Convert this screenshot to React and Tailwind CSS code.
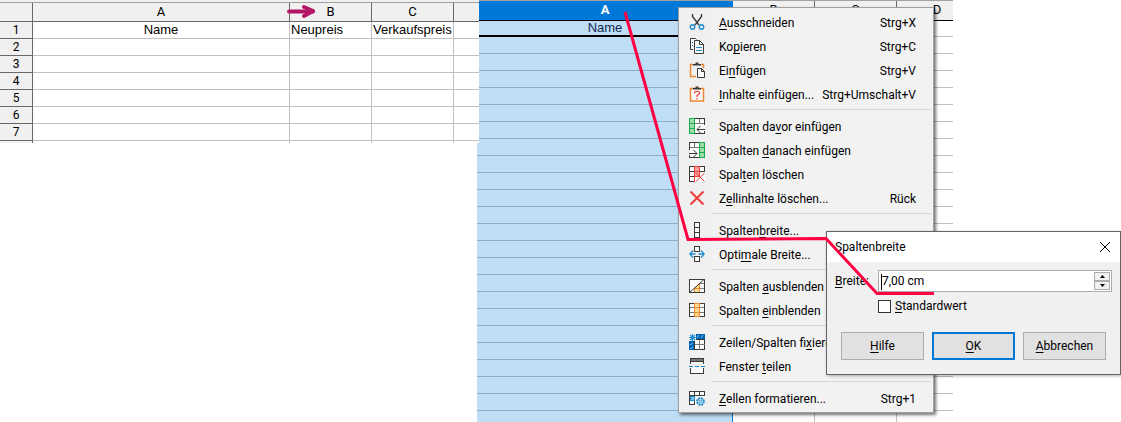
import React, { useState } from 'react';

const DARK = '#3a3a38';
const BLUE = '#1e8bcd';
const GREEN = '#18ab50';
const RED = '#ed3d3b';
const ORANGE = '#ed8733';

const Icon = ({ children, crisp = true }) => (
    <svg width="16" height="16" viewBox="0 0 16 16" fill="none" stroke={DARK}
        shapeRendering={crisp ? 'crispEdges' : 'auto'} aria-hidden="true">
        {children}
    </svg>
);

const CutIcon = () => (
    <Icon crisp={false}>
        <path d="M3.500 0v2.500L10 11M12.500 0v2.500L6 11" strokeWidth="1.400" />
        <circle cx="3.500" cy="13" r="2.200" stroke={BLUE} strokeWidth="1.400" />
        <circle cx="12.500" cy="13" r="2.200" stroke={BLUE} strokeWidth="1.400" />
    </Icon>
);

const CopyIcon = () => (
    <Icon crisp={false}>
        <path d="M4 11.500H1.500V.5h5l1 1" fill="#fafafa" />
        <path d="M5.500 2.500h5l4 4v9h-9z" fill="#fafafa" />
        <path d="M10.500 2.500v4h4" />
        <path d="M7 9.500h6M7 12.500h6M3 4.500h1M3 7.500h1" stroke={BLUE} />
    </Icon>
);

const PasteIcon = () => (
    <Icon crisp={false}>
        <path d="M4.500 2.500h-3v12H7M11.500 2.500h3V6" stroke={ORANGE} strokeWidth="1.500" />
        <path d="M4 3.500V2h2.500V.5h3V2H12v1.500z" fill={DARK} stroke="none" />
        <path d="M8.500 6.500h4l3 3v6h-7z" fill="#fafafa" />
        <path d="M12.500 6.500v3h3" />
    </Icon>
);

const PasteSpecialIcon = () => (
    <Icon crisp={false}>
        <path d="M1.500 2.500h13v12.500h-13z" fill="#fafafa" stroke={ORANGE} strokeWidth="1.500" />
        <path d="M4 3.500V2h2.500V.5h3V2H12v1.500z" fill={DARK} stroke="none" />
        <path d="M5.500 7.500V6.500Q5.500 5.500 6.500 5.500h3q1 0 1 1v1L8 9.500v1.500M8 12v1.500" stroke={RED} strokeWidth="1.200" />
    </Icon>
);

const InsertBeforeIcon = () => (
    <Icon>
        <path d="M5.500.5h10v15h-10z" fill="#fafafa" stroke="none" />
        <path d="M5 5.500h10.500M10.500 0v6" stroke="#787878" />
        <path d="M5.500.5h10v6M6 15.500h9.500V13" />
        <path d="M.5.5h5v15h-5z" fill="#a0dcaa" stroke={GREEN} />
        <path d="M1 5.500h4M1 10.500h4" stroke={GREEN} />
        <path d="M16 11.500H8M11.500 8L8 11.500l3.500 3.500" shapeRendering="auto" />
    </Icon>
);

const InsertAfterIcon = () => (
    <Icon>
        <path d="M.5.5h10v15H.5z" fill="#fafafa" stroke="none" />
        <path d="M1 5.500h9M5.500 1v5" stroke="#787878" />
        <path d="M.5 8V.5h10M.5 13v2.500h10" />
        <path d="M10.500.5h5v15h-5z" fill="#a0dcaa" stroke={GREEN} />
        <path d="M11 5.500h4M11 10.500h4" stroke={GREEN} />
        <path d="M0 11.500h8M4.500 8L8 11.500 4.500 15" shapeRendering="auto" />
    </Icon>
);

const DeleteColumnsIcon = () => (
    <Icon>
        <path d="M.5.5h15v15H.5z" fill="#fafafa" stroke="none" />
        <path d="M15.500 5V.5H.5v15H6M.5 5.500h15M.5 10.500h5" />
        <path d="M5.500.5h5v10h-5z" fill="#f5a0a0" stroke={RED} />
        <path d="M5.500 5.500h5M5.500 10v6" stroke={RED} />
        <path d="M7 7l8.500 8.500M15.500 7L7 15.500" stroke={RED} shapeRendering="auto" />
    </Icon>
);

const DeleteIcon = () => (
    <Icon crisp={false}>
        <path d="M1.500 1.500l13 13M14.500 1.500l-13 13" stroke={RED} strokeWidth="2" />
    </Icon>
);

const ColumnWidthIcon = () => (
    <Icon>
        <path d="M5.500.5h5v15h-5zM5.500 5.500h5M5.500 10.500h5" fill="#fafafa" />
    </Icon>
);

const OptimalWidthIcon = () => (
    <Icon>
        <path d="M5.500.5h5v5h-5zM5.500 10.500h5v5h-5z" fill="#fafafa" />
        <path d="M.8 8H6.500M9.500 8h5.700M4 4.500L.8 8 4 11.500M12 4.500L15.200 8 12 11.500" stroke={BLUE} strokeWidth="1.300" shapeRendering="auto" />
    </Icon>
);

const HideColumnsIcon = () => (
    <Icon>
        <path d="M.5 1.500h15v13H.5z" fill="#fafafa" />
        <path d="M11 5.500h4.500M5 10.500h10.500" stroke="#787878" />
        <path d="M5.500 14.500v-4l5-5v9z" fill="#f8db8f" stroke={ORANGE} />
        <path d="M5.500 10.500h5" stroke={ORANGE} />
        <path d="M.5 14.500L15 1.500" shapeRendering="auto" />
        <path d="M.5 1.500h15v13H.5z" />
    </Icon>
);

const ShowColumnsIcon = () => (
    <Icon>
        <path d="M.5 1.500h15v13H.5z" fill="#fafafa" />
        <path d="M1 5.500h14M1 10.500h14" stroke="#787878" />
        <path d="M5.500 1.500h5v13h-5z" fill="#f8db8f" stroke={ORANGE} />
        <path d="M5.500 5.500h5M5.500 10.500h5" stroke={ORANGE} />
    </Icon>
);

const FreezeIcon = () => (
    <Icon>
        <path d="M0 0h16v16H0z" fill="#0063b1" stroke="none" />
        <path d="M5.500 5.500h10v10h-10z" fill="#fafafa" />
        <path d="M10.500 5.500v10M5.500 10.500h10" stroke="#787878" />
        <path d="M0 0h7v7H0z" fill="#f2f2f2" stroke="none" />
        <path d="M8 4l2-3M12 4l2-3M1 11l3-2M1 15l3-2" stroke="#83beec" shapeRendering="auto" />
        <path d="M3.500 0v7M0 3.500h7M1 1l5 5M6 1L1 6" stroke={BLUE} strokeWidth="1.200" shapeRendering="auto" />
    </Icon>
);

const SplitIcon = () => (
    <Icon>
        <path d="M1.500 6V.5h13V6M1.500 10v5.500h13V10" fill="#fafafa" />
        <path d="M2 1h12v3H2z" fill="#797774" stroke="none" />
        <path d="M1 3.500h14" />
        <path d="M0 8.500h4M6 8.500h4M12 8.500h4" stroke={BLUE} />
    </Icon>
);

const FormatCellsIcon = () => (
    <Icon>
        <path d="M.5 1.500h15v13H.5z" fill="#fafafa" stroke="none" />
        <path d="M15.500 6V1.500H.5v13H6M5.500 1.500v13M10.500 1.500V6M.5 5.500h15M.5 10.500h5" />
        <path d="M1 6h4v4H1z" fill="#83beec" stroke={BLUE} />
        <circle cx="11.500" cy="11.500" r="4.500" fill="#f2f2f2" stroke="none" />
        <circle cx="11.500" cy="11.500" r="3.500" stroke={BLUE} strokeWidth="1.800" strokeDasharray="1.700 1.050" shapeRendering="auto" />
        <circle cx="11.500" cy="11.500" r="3" stroke={BLUE} strokeWidth=".8" shapeRendering="auto" />
        <circle cx="11.500" cy="11.500" r="1.200" stroke={BLUE} shapeRendering="auto" />
    </Icon>
);

// An underscore in a label marks the access key that follows it
const menuGroups = [
    [
        { label: '_Ausschneiden', shortcut: 'Strg+X', icon: CutIcon },
        { label: 'Ko_pieren', shortcut: 'Strg+C', icon: CopyIcon },
        { label: 'Ei_nfügen', shortcut: 'Strg+V', icon: PasteIcon },
        { label: '_Inhalte einfügen...', shortcut: 'Strg+Umschalt+V', icon: PasteSpecialIcon }
    ],
    [
        { label: 'Spalten da_vor einfügen', icon: InsertBeforeIcon },
        { label: 'Spalten _danach einfügen', icon: InsertAfterIcon },
        { label: 'Spal_ten löschen', icon: DeleteColumnsIcon },
        { label: 'Z_ellinhalte löschen...', shortcut: 'Rück', icon: DeleteIcon }
    ],
    [
        { label: 'Spalten_breite...', icon: ColumnWidthIcon },
        { label: 'Opti_male Breite...', icon: OptimalWidthIcon }
    ],
    [
        { label: 'Spalten _ausblenden', icon: HideColumnsIcon },
        { label: 'Spalten _einblenden', icon: ShowColumnsIcon }
    ],
    [
        { label: 'Zeilen/Spalten fi_xieren', icon: FreezeIcon },
        { label: 'Fenster _teilen', icon: SplitIcon }
    ],
    [
        { label: '_Zellen formatieren...', shortcut: 'Strg+1', icon: FormatCellsIcon }
    ]
];

const AccessLabel = ({ text }) => {
    const [before, after] = text.split('_');
    return (
        <span className="whitespace-pre">{before}<span className="underline underline-offset-2">{after[0]}</span>{after.slice(1)}</span>
    );
};

const PriceSheet = () => {
    const head = 'h-[19px] p-0 border-r border-b border-[#696969] font-normal leading-[18px]';
    const cell = 'h-[17px] p-0 border-r border-b border-[#c0c0c0] leading-4';

    return (
        <div className="relative z-10 -mr-0.5 h-[143px] overflow-hidden bg-white">
            <div className="h-[3px] bg-[#f0f0f0] border-b border-[#a0a0a0]" />
            <table className="w-full table-fixed border-separate border-spacing-0">
                <colgroup>
                    <col className="w-[33px]" />
                    <col />
                    <col className="w-[82px]" />
                    <col className="w-[82px]" />
                    <col className="w-[25px]" />
                </colgroup>
                <thead className="bg-[#f0f0f0] text-[13px]">
                    <tr>
                        <th className={head}></th>
                        <th className={head}>A</th>
                        <th className={head}>B</th>
                        <th className={head}>C</th>
                        <th className="h-[19px] p-0 border-b border-[#696969]"></th>
                    </tr>
                </thead>
                <tbody>
                    {[1, 2, 3, 4, 5, 6, 7, 8].map(row => (
                        <tr key={row}>
                            <th className="h-[17px] p-0 border-r border-b border-[#696969] bg-[#f0f0f0] text-xs font-normal leading-4">{row < 8 ? row : ''}</th>
                            <td className={`${cell} text-center font-['Liberation_Sans',sans-serif] text-[13px]`}>{row === 1 && 'Name'}</td>
                            <td className={`${cell} pl-px font-['Liberation_Sans',sans-serif] text-[13px]`}>{row === 1 && 'Neupreis'}</td>
                            <td className={`${cell} pl-px font-['Liberation_Sans',sans-serif] text-[13px]`}>{row === 1 && 'Verkaufspreis'}</td>
                            <td className="h-[17px] p-0 border-b border-[#c0c0c0]"></td>
                        </tr>
                    ))}
                </tbody>
            </table>
            {/* Arrow on the border between columns A and B */}
            <svg className="absolute top-0 right-[163px] pointer-events-none" width="30" height="22" viewBox="0 0 30 22"
                fill="none" stroke="#b31766" strokeLinecap="round" strokeLinejoin="round" aria-hidden="true">
                <path d="M3 11.500H27" strokeWidth="4" />
                <path d="M18 7l9 4-9 5" strokeWidth="4" />
            </svg>
        </div>
    );
};

const SelectedSheet = () => {
    const head = 'h-5 p-0 pb-0.5 border-r border-b border-r-[#696969] border-b-black bg-[#f0f0f0] font-normal leading-4';
    const cell = 'h-[17px] p-0 border-r border-b border-[#c0c0c0]';

    return (
        <div className="h-[422px] overflow-hidden">
            <div className="h-px bg-[#a0a0a0]" />
            <table className="w-full table-fixed border-separate border-spacing-0 text-[13px]">
                <colgroup>
                    <col />
                    <col className="w-[82px]" />
                    <col className="w-[82px]" />
                    <col className="w-[56px]" />
                </colgroup>
                <thead>
                    <tr>
                        <th className="h-5 p-0 pb-0.5 border-b border-black bg-[#0078d7] text-white font-bold leading-4">A</th>
                        <th className={head}>B</th>
                        <th className={head}>C</th>
                        <th className="h-5 p-0 pb-0.5 pl-6 border-b border-black bg-[#f0f0f0] font-normal leading-4">D</th>
                    </tr>
                </thead>
                <tbody>
                    <tr>
                        <td className="h-4 p-0 border-b-2 border-black bg-[#bfddf5] text-center text-[#142850] font-['Liberation_Sans',sans-serif] leading-[14px]">Name</td>
                        <td className="h-4 p-0 border-r border-b border-[#c0c0c0]"></td>
                        <td className="h-4 p-0 border-r border-b border-[#c0c0c0]"></td>
                        <td className="h-4 p-0 border-b border-[#c0c0c0]"></td>
                    </tr>
                    {Array.from({ length: 23 }, (_, i) => (
                        <tr key={i}>
                            <td className="h-[17px] p-0 border-r border-b border-r-[#0078d7] border-b-[#8fadc9] bg-[#bfddf5]"></td>
                            <td className={cell}></td>
                            <td className={cell}></td>
                            <td className="h-[17px] p-0 border-b border-[#c0c0c0]"></td>
                        </tr>
                    ))}
                </tbody>
            </table>
        </div>
    );
};

const ContextMenu = () => (
    <div role="menu" className="absolute top-[7px] left-[201px] w-64 pt-[3px] pb-px border border-[#a0a0a0] bg-linear-to-r from-[#f0f0f0] from-[32px] to-[#f2f2f2] to-[32px] shadow-[2px_2px_3px_rgba(0,0,0,0.55)]">
        {menuGroups.map((group, i) => (
            <div key={i}>
                {i > 0 && <div role="separator" className="mt-0.5 mb-[5px] ml-[33px] mr-0.5 h-px bg-[#d7d7d7]" />}
                {group.map(({ label, shortcut, icon: ItemIcon }) => (
                    <button key={label} type="button" role="menuitem" className="flex w-full h-6 pl-2.5 pr-[17px] text-left">
                        <span className="w-[30px] shrink-0 pt-[3px]"><ItemIcon /></span>
                        <span className="leading-6"><AccessLabel text={label} /></span>
                        {shortcut && <span className="ml-auto leading-6">{shortcut}</span>}
                    </button>
                ))}
            </div>
        ))}
    </div>
);

const ColumnWidthDialog = () => {
    const [width, setWidth] = useState('7,00 cm');
    const [standard, setStandard] = useState(false);

    const step = delta => {
        const value = parseFloat(width.replace(',', '.')) || 0;
        setWidth(`${Math.max(0, value + delta).toFixed(2).replace('.', ',')} cm`);
    };

    const button = 'h-7 border border-[#adadad] bg-[#e1e1e1]';

    return (
        <div role="dialog" aria-label="Spaltenbreite" className="absolute top-[231px] left-[349px] w-[295px] border border-[#646464] bg-[#f0f0f0] shadow-[1px_1px_3px_rgba(0,0,0,0.3)]">
            <div className="flex items-center justify-between h-[30px] pl-2 pr-2.5 bg-white">
                <span>Spaltenbreite</span>
                <button type="button" aria-label="Schließen">
                    <svg width="10" height="10" viewBox="0 0 10 10" stroke="black" aria-hidden="true">
                        <path d="M0 0l10 10M10 0L0 10" />
                    </svg>
                </button>
            </div>
            <div className="pt-2 px-2 pb-3.5">
                <div className="flex items-center">
                    <label htmlFor="width" className="w-[43px]"><AccessLabel text="_Breite:" /></label>
                    <div className="relative flex flex-1 h-[22px] p-px border border-[#abadb3] bg-white">
                        <input id="width" type="text" value={width} onChange={e => setWidth(e.target.value)}
                            className="min-w-0 flex-1 pl-0.5 outline-none" />
                        <span className="absolute top-[3px] left-0.5 w-px h-4 bg-black" />
                        <div className="flex w-4 flex-col">
                            <button type="button" aria-label="Mehr" onClick={() => step(0.1)}
                                className="flex flex-1 items-center justify-center border border-[#adadad] bg-[#f0f0f0]">
                                <svg width="5" height="3" viewBox="0 0 5 3" aria-hidden="true"><path d="M0 3L2.500 0 5 3z" /></svg>
                            </button>
                            <button type="button" aria-label="Weniger" onClick={() => step(-0.1)}
                                className="flex flex-1 items-center justify-center border border-[#adadad] bg-[#f0f0f0]">
                                <svg width="5" height="3" viewBox="0 0 5 3" aria-hidden="true"><path d="M0 0l2.500 3L5 0z" /></svg>
                            </button>
                        </div>
                    </div>
                </div>
                <div className="flex items-center mt-1.5 pl-[43px] h-4 gap-1">
                    <input id="standard" type="checkbox" checked={standard} onChange={e => setStandard(e.target.checked)}
                        className="appearance-none size-[13px] border border-[#333333] bg-white checked:bg-[#0078d7]" />
                    <label htmlFor="standard"><AccessLabel text="_Standardwert" /></label>
                </div>
                <div className="grid grid-cols-3 gap-2 mt-[18px] px-1.5">
                    <button type="button" className={button}><AccessLabel text="_Hilfe" /></button>
                    <button type="button" className="h-7 border-2 border-[#0078d7] bg-[#e1e1e1]"><AccessLabel text="_OK" /></button>
                    <button type="button" className={button}><AccessLabel text="_Abbrechen" /></button>
                </div>
            </div>
        </div>
    );
};

const App = () => {
    return (
        <div className="grid grid-cols-[477fr_476fr_168fr] items-start overflow-hidden bg-white text-black text-xs font-['Roboto','Noto_Sans',sans-serif]">
            <PriceSheet />
            <div className="relative">
                <SelectedSheet />
                <ContextMenu />
                <ColumnWidthDialog />
                {/* Red trail from the column header over the menu entry to the input */}
                <svg className="absolute top-0 left-[140px] pointer-events-none" width="330" height="300" viewBox="0 0 330 300"
                    fill="none" stroke="#ff0043" strokeWidth="3" aria-hidden="true">
                    <path d="M8 12l63 227.500L145 239l64-.5 51 55h57" />
                </svg>
            </div>
        </div>
    );
};

export default App;
